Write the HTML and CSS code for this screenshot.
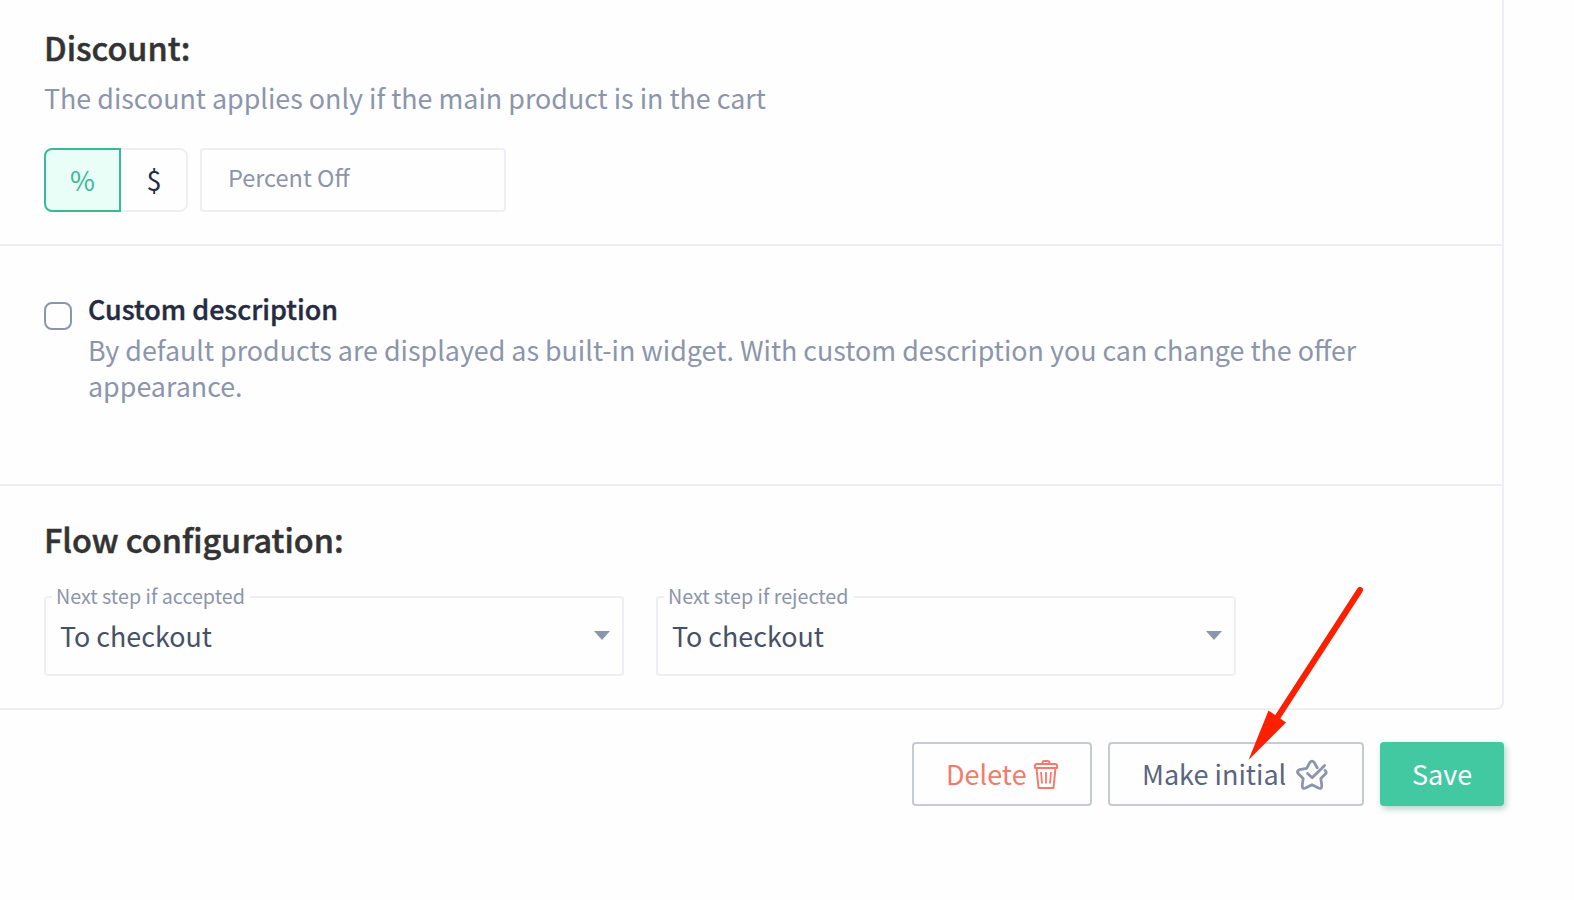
FILE: index.html
```
<!DOCTYPE html>
<html lang="en">
  <head>
    <meta charset="UTF-8" />
    <meta name="viewport" content="width=device-width, initial-scale=1.0" />
    <title>Offer settings</title>

    <link rel="stylesheet" href="styles.css">
</head>
<body>
    <div class="card">
        <section class="discount">
            <h2>Discount:</h2>
            <p class="hint">The discount applies only if the main product is in the cart</p>
            <div class="controls">
                <div class="toggle">
                    <button class="unit active">%</button>
                    <button class="unit">$</button>
                </div>
                <input class="amount" type="text" placeholder="Percent Off">
            </div>
        </section>

        <section class="description">
            <span class="checkbox"></span>
            <div>
                <h3>Custom description</h3>
                <p class="hint">By default products are displayed as built-in widget. With custom description you can change the offer<br>appearance.</p>
            </div>
        </section>

        <section class="flow">
            <h2>Flow configuration:</h2>
            <div class="selects">
                <div class="select">
                    <span class="label">Next step if accepted</span>
                    <span class="value">To checkout</span>
                    <span class="caret"></span>
                </div>
                <div class="select">
                    <span class="label">Next step if rejected</span>
                    <span class="value">To checkout</span>
                    <span class="caret"></span>
                </div>
            </div>
        </section>
    </div>

    <div class="actions">
        <button class="btn delete"><span>Delete</span>
            <svg width="24" height="30" viewBox="0 0 24 30" fill="none" stroke="currentColor" stroke-width="2" stroke-linejoin="round" stroke-linecap="round">
                <path d="M8.500 4V3Q8.500 1 10.500 1H13.500Q15.500 1 15.500 3V4" />
                <path d="M1 8V6Q1 4 3 4H21Q23 4 23 6V8Z" />
                <path d="M2.500 8L4.500 28H19.500L21.500 8" />
                <path d="M7 12L8 23.500M12 12V23.500M17 12L16 23.500" stroke-width="1.800" stroke-linecap="butt" />
            </svg>
        </button>
        <button class="btn initial"><span>Make initial</span>
            <svg width="32" height="32" viewBox="0 0 32 32" fill="none" stroke="#8c95ab" stroke-width="2.800" stroke-linejoin="round" stroke-linecap="round">
                <path d="M21.200 8.800L18.300 3.600Q16 0.600 13.700 3.600L10.700 9.400L3.600 10.600Q0 12 2.400 14.800L7.200 19.600L6.200 26.600Q6.200 30.200 9.600 29L16 25.800L22.400 29Q25.800 30.200 25.800 26.600L24.800 19.600L29.600 14.800Q31 12.800 29 11.400" />
                <path d="M11.600 14.400L16.200 18.800L28.600 6.600" />
            </svg>
        </button>
        <button class="btn save">Save</button>
    </div>

    <!-- pointer to the "Make initial" button -->
    <svg class="pointer" width="120" height="180" viewBox="0 0 120 180">
        <path d="M114 10L31 138" stroke="#fc2000" stroke-width="6" stroke-linecap="round" />
        <path d="M2.500 180L22.500 130.500L40 142.500Z" fill="#fc2000" />
    </svg>
</body>
</html>
```
FILE: styles.css
```
* {
    box-sizing: border-box;
}

body {
    margin: 0;
    height: 900px;
    overflow: hidden;
    position: relative;
    background-color: #fefefe;
    font-family: "Noto Sans CJK SC", "Noto Sans", sans-serif;
    font-size: 26.85px;
    line-height: 36px;
}

h2, h3, p {
    margin: 0;
}

h2 {
    font-size: 32.4px;
    line-height: 40px;
    font-weight: 500;
    color: #333;
    -webkit-text-stroke: 0.5px #333;
}

h3 {
    margin-bottom: 5px;
    font-size: 26.9px;
    line-height: 36px;
    font-weight: 500;
    color: #252b42;
    -webkit-text-stroke: 0.4px #252b42;
}

button, input {
    font-family: inherit;
}

.card {
    width: 1504px;
    height: 710px;
    border-right: 2px solid #eeeff4;
    border-bottom: 2px solid #eeeff4;
    border-bottom-right-radius: 8px;
}

.hint {
    color: #8c95ab;
}

.discount {
    height: 246px;
    padding: 27px 44px 0;
    border-bottom: 2px solid #eeeff4;
}

.discount h2 {
    margin-bottom: 13px;
}

.controls {
    display: flex;
    gap: 12px;
    margin-top: 32px;
}

.toggle {
    display: flex;
}

.unit {
    width: 67px;
    height: 64px;
    padding: 0 0 0 1px;
    border: 2px solid #eeeff4;
    border-left: none;
    border-radius: 0 8px 8px 0;
    background-color: transparent;
    font-size: 27px;
    line-height: 36px;
    color: #252b42;
}

.unit.active {
    width: 77px;
    padding: 0;
    border: 2px solid #39b994;
    border-radius: 8px 0 0 8px;
    background-color: #e8fef7;
    color: #39b994;
}

.amount {
    width: 306px;
    height: 64px;
    padding: 0 26px 6px;
    border: 2px solid #eeeff4;
    border-radius: 4px;
    background-color: transparent;
    font-size: 23.5px;
}

.amount::placeholder {
    color: #8c95ab;
}

.description {
    display: flex;
    gap: 16px;
    height: 240px;
    padding: 45px 44px 0;
    border-bottom: 2px solid #eeeff4;
}

.checkbox {
    width: 28px;
    height: 28px;
    margin-top: 11px;
    border: 2px solid #8c95ab;
    border-radius: 8px;
}

.flow {
    padding: 33px 44px 0;
}

.selects {
    display: flex;
    gap: 32px;
    margin-top: 37px;
}

.select {
    position: relative;
    display: flex;
    align-items: center;
    justify-content: space-between;
    width: 580px;
    height: 80px;
    padding: 0 12px 0 14px;
    border: 2px solid #eeeff4;
    border-radius: 4px;
    color: #465067;
}

.label {
    position: absolute;
    top: -15px;
    left: 6px;
    padding: 0 5px 0 4px;
    background-color: #fefefe;
    font-size: 19.7px;
    line-height: 26px;
    color: #8c95ab;
}

.caret {
    margin-bottom: 1px;
    border: 8px solid transparent;
    border-top: 9px solid #8c95ab;
    border-bottom: none;
}

.actions {
    display: flex;
    justify-content: flex-end;
    gap: 16px;
    width: 1504px;
    margin-top: 32px;
}

.btn {
    display: flex;
    align-items: center;
    height: 64px;
    padding: 0 32px;
    border: 2px solid #c6cad3;
    border-radius: 4px;
    background-color: transparent;
    font-size: 27px;
    line-height: 36px;
    white-space: nowrap;
}

.delete {
    justify-content: space-between;
    width: 180px;
    color: #f47b69;
}

.delete svg {
    margin-top: 2px;
}

.initial {
    gap: 10px;
    width: 256px;
    color: #5b6580;
}

.initial svg {
    margin-top: 1px;
}

.save {
    justify-content: center;
    width: 124px;
    border: none;
    background-color: #43c9a2;
    box-shadow: 2px 3px 6px rgba(67, 150, 125, 0.4);
    color: #fff;
}

.pointer {
    position: absolute;
    left: 1246px;
    top: 580px;
}
```
